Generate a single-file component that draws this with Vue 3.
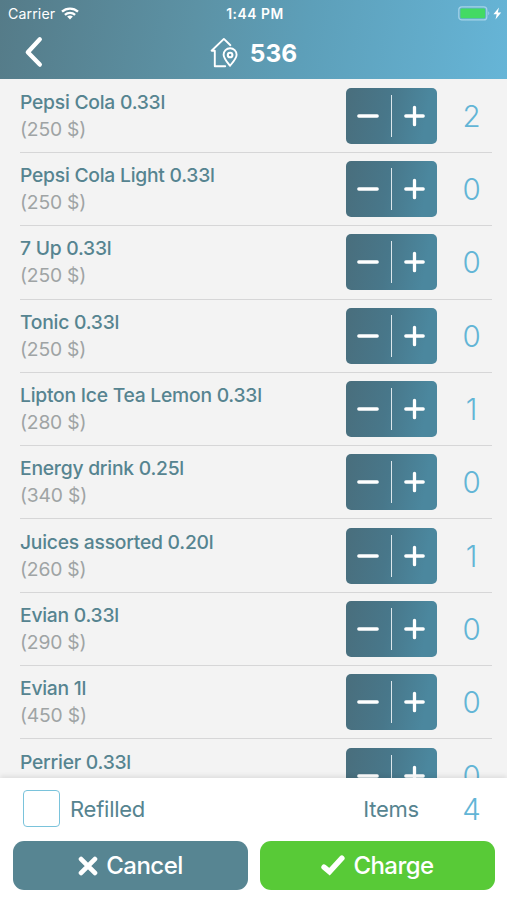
<script setup>
import { computed, ref } from 'vue'

const items = ref([
  { name: 'Pepsi Cola 0.33l', price: 250, count: 2 },
  { name: 'Pepsi Cola Light 0.33l', price: 250, count: 0 },
  { name: '7 Up 0.33l', price: 250, count: 0 },
  { name: 'Tonic 0.33l', price: 250, count: 0 },
  { name: 'Lipton Ice Tea Lemon 0.33l', price: 280, count: 1 },
  { name: 'Energy drink 0.25l', price: 340, count: 0 },
  { name: 'Juices assorted 0.20l', price: 260, count: 1 },
  { name: 'Evian 0.33l', price: 290, count: 0 },
  { name: 'Evian 1l', price: 450, count: 0 },
  { name: 'Perrier 0.33l', price: 290, count: 0 },
])
const refilled = ref(false)
const total = computed(() => items.value.reduce((sum, item) => sum + item.count, 0))
</script>

<template>
  <div class="screen">
    <header class="header">
      <div class="status">
        <div class="carrier">
          <span>Carrier</span>
          <svg class="wifi" width="18" height="13" viewBox="0 0 18 13" fill="none" stroke="#fff" stroke-width="2.3">
            <path d="M1 4.7C5.5.5 12.500.5 17 4.700" />
            <path d="M3.900 7.900C6.800 5.200 11.200 5.200 14.100 7.900" />
            <path d="M6.100 9.600Q9 7.300 11.900 9.600L9 12.600Z" fill="#fff" stroke="none" />
          </svg>
        </div>
        <span class="clock">1:44 PM</span>
        <svg class="battery" width="44" height="15" viewBox="0 0 44 15">
          <rect x=".8" y=".9" width="28" height="13" rx="3" fill="none" stroke="#a5d3e8" stroke-width="1.2" />
          <rect x="2.400" y="2.500" width="24.800" height="9.800" rx="1.400" fill="#43da63" />
          <path d="M30.300 5.300Q32.300 7.300 30.300 9.300Z" fill="#a5d3e8" />
          <path d="M41 1.600L35.400 8.300H38.700L37.500 13.600L43.200 6.400H39.800Z" fill="#fff" />
        </svg>
      </div>
      <div class="nav">
        <button class="back" aria-label="Back">
          <svg width="20" height="32" viewBox="0 0 20 32" fill="none" stroke="#fff" stroke-width="4.300" stroke-linecap="round" stroke-linejoin="round">
            <path d="M15.800 3.300L3.800 16.200L15.800 28.600" />
          </svg>
        </button>
        <div class="title">
          <svg width="28" height="31" viewBox="0 0 28 31" fill="none" stroke="#fff" stroke-width="1.900" stroke-linecap="round" stroke-linejoin="round">
            <path d="M20.400 8.200L13.900 1.900L1.600 13.700H4.800V29.300H15.200" />
            <path d="M20 28.800C17.500 25.500 13.600 21.200 13.600 17.700A6.500 6.500 0 0 1 26.600 17.700C26.600 21.200 22.700 25.500 20 28.800Z" />
            <circle cx="20.100" cy="18" r="2.300" stroke-width="2.100" />
          </svg>
          <h1>536</h1>
        </div>
      </div>
    </header>

    <main class="list">
      <div v-for="item in items" :key="item.name" class="item">
        <div class="info">
          <div class="name">{{ item.name }}</div>
          <div class="price">({{ item.price }} $)</div>
        </div>
        <div class="stepper">
          <button aria-label="Decrease" @click="item.count = Math.max(0, item.count - 1)">
            <svg width="24" height="24" viewBox="0 0 24 24"><path d="M2.800 12H21.200" /></svg>
          </button>
          <span class="divider"></span>
          <button aria-label="Increase" @click="item.count++">
            <svg width="24" height="24" viewBox="0 0 24 24"><path d="M2.800 12H20.200M11.500 3.300V20.700" /></svg>
          </button>
        </div>
        <div class="count">{{ item.count }}</div>
      </div>
    </main>

    <footer class="footer">
      <div class="summary">
        <button class="checkbox" role="checkbox" aria-label="Refilled" :aria-checked="refilled" @click="refilled = !refilled">
          <svg v-if="refilled" width="24" height="24" viewBox="0 0 24 24"><path d="M4 12L10 18L20 6" /></svg>
        </button>
        <span class="label">Refilled</span>
        <span class="items-label">Items</span>
        <span class="count">{{ total }}</span>
      </div>
      <div class="actions">
        <button class="action cancel">
          <svg width="20" height="20" viewBox="0 0 20 20" fill="none" stroke="#fff" stroke-width="4.800" stroke-linecap="round">
            <path d="M3.100 3.100L16.900 16.900M16.900 3.100L3.100 16.900" />
          </svg>
          <span>Cancel</span>
        </button>
        <button class="action charge">
          <svg width="24" height="21" viewBox="0 0 24 21" fill="none" stroke="#fff" stroke-width="5.400" stroke-linejoin="miter" stroke-linecap="round">
            <path d="M3 12.200L8.500 16.700L20.900 3.200" />
          </svg>
          <span>Charge</span>
        </button>
      </div>
    </footer>
  </div>
</template>

<style>
body {
  margin: 0;
}
</style>

<style scoped>
.screen {
  width: 507px;
  height: 900px;
  display: flex;
  flex-direction: column;
  overflow: hidden;
  background: #f3f3f3;
  font-family: Inter, "Liberation Sans", sans-serif;
}
button {
  padding: 0;
  border: 0;
  background: none;
  font: inherit;
  color: inherit;
}
svg {
  display: block;
  flex: none;
}
.header {
  height: 79px;
  flex: none;
  color: #fff;
  background: linear-gradient(100deg, #557b88 0%, #5c92a5 38%, #5d9fb9 60%, #66b5d7 100%);
}
.status {
  height: 27px;
  display: grid;
  grid-template-columns: 1fr auto 1fr;
  align-items: center;
  padding: 0 5px 0 8px;
  font-size: 14.200px;
}
.carrier {
  display: flex;
  align-items: center;
  gap: 6px;
  letter-spacing: 0.1px;
}
.clock {
  font-size: 13.800px;
  font-weight: 600;
  letter-spacing: 0.550px;
}
.battery {
  justify-self: end;
}
.nav {
  height: 52px;
  display: grid;
  grid-template-columns: 1fr auto 1fr;
}
.back {
  width: 20px;
  margin: 9px 0 0 24px;
  align-self: start;
}
.title {
  display: flex;
  align-items: center;
  gap: 12px;
  height: 51px;
}
h1 {
  margin: 0;
  font-size: 24.500px;
  font-weight: 700;
}
.list {
  flex: 1;
  min-height: 0;
  overflow: hidden;
  padding: 0.700px 15px 0 20px;
}
.item {
  box-sizing: border-box;
  height: 73.300px;
  display: flex;
  align-items: center;
  border-bottom: 1px solid #d6d6d7;
}
.info {
  flex: 1;
  font-size: 19.300px;
  line-height: 27px;
  white-space: nowrap;
}
.name {
  color: #568490;
  font-weight: 500;
  letter-spacing: -0.240px;
}
.price {
  color: #9fa4a5;
  letter-spacing: -0.200px;
}
.stepper {
  width: 91px;
  height: 56px;
  display: flex;
  align-items: center;
  border-radius: 5px;
  background: linear-gradient(100deg, #496f7e 5%, #48778a 45%, #4b879e 85%);
}
.stepper button {
  flex: 1;
  height: 100%;
  display: grid;
  place-items: center;
}
.stepper path {
  fill: none;
  stroke: #fff;
  stroke-width: 3.300;
  stroke-linecap: round;
}
.divider {
  width: 1.500px;
  height: 42px;
  background: #dce7ec;
}
.count {
  width: 55px;
  padding-left: 7px;
  box-sizing: content-box;
  margin-right: -7px;
  text-align: center;
  color: #62b5d6;
  font-size: 29.500px;
  font-weight: 350;
}
.footer {
  position: relative;
  height: 122px;
  flex: none;
  background: #fff;
  box-shadow: 0 -2px 5px rgba(0, 0, 0, 0.09);
  color: #568490;
}
.summary {
  height: 61px;
  display: flex;
  align-items: center;
  padding: 0 15px 0 23px;
  font-size: 22px;
  letter-spacing: -0.250px;
}
.checkbox {
  box-sizing: border-box;
  width: 37px;
  height: 37px;
  border: 1px solid #7ac3db;
  border-radius: 4px;
  display: grid;
  place-items: center;
}
.checkbox path {
  fill: none;
  stroke: #62b5d6;
  stroke-width: 3;
}
.label {
  flex: 1;
  margin-left: 10px;
}
.items-label {
  margin-right: 18px;
}
.actions {
  display: grid;
  grid-template-columns: 1fr 1fr;
  gap: 12px;
  padding: 2px 12px 0 13px;
}
.action {
  height: 49px;
  display: flex;
  align-items: center;
  justify-content: center;
  gap: 8px;
  border-radius: 11px;
  color: #fff;
  font-size: 24px;
  font-weight: 500;
  letter-spacing: -0.550px;
}
.cancel {
  background: #578592;
}
.charge {
  background: #58ca37;
}
</style>
